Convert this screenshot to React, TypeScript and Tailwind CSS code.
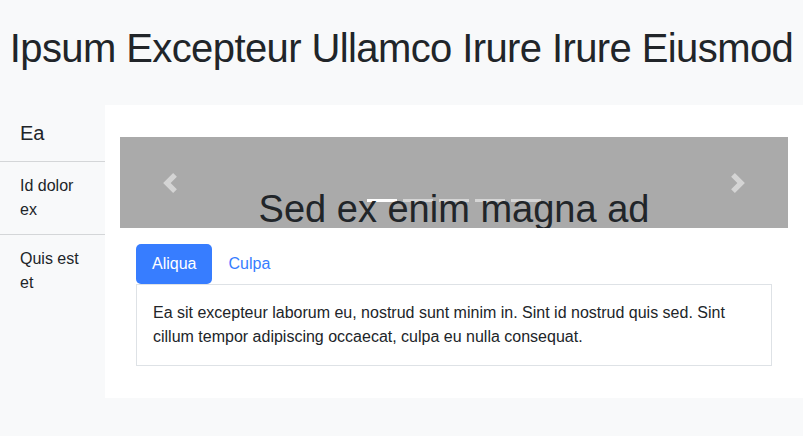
import React from "react";

const sideItems = ["Id dolor ex", "Quis est et"];

const Chevron = ({ dir }: { dir: "left" | "right" }) => (
  <svg width="20" height="20" viewBox="0 0 8 8" fill="#fff">
    {dir === "left" ? (
      <path d="M5.25 0l-4 4 4 4 1.5-1.5L4.25 4l2.5-2.5L5.25 0z" />
    ) : (
      <path d="M2.75 0l-1.5 1.5L3.75 4l-2.5 2.5L2.75 8l4-4-4-4z" />
    )}
  </svg>
);

const App = () => {
  return (
    <div className="min-h-screen bg-[#f8f9fa] text-[#212529] font-['Liberation_Sans',Arial,sans-serif]">
      <header className="h-[105px] pt-6 text-center">
        <h1 className="text-[40px] leading-[48px] font-medium tracking-[-0.6px]">
          Ipsum Excepteur Ullamco Irure Irure Eiusmod
        </h1>
      </header>

      <div className="flex">
        <aside className="w-[105px] shrink-0">
          <div className="px-5 py-3 text-[20px] leading-[32px] border-b border-[#d4d6d8]">
            Ea
          </div>
          {sideItems.map((item, i) => (
            <div
              key={item}
              className={
                i === 0
                  ? "px-5 py-3 text-base leading-6 border-b border-[#d4d6d8]"
                  : "px-5 py-3 text-base leading-6"
              }
            >
              {item}
            </div>
          ))}
        </aside>

        <main className="flex-1 bg-white px-[15px] py-8">
          <div className="relative h-[91px] overflow-hidden bg-[#aaaaaa]">
            <div className="absolute inset-y-0 left-0 w-[100px] flex items-center justify-center opacity-50">
              <Chevron dir="left" />
            </div>
            <div className="absolute inset-y-0 right-0 w-[100px] flex items-center justify-center opacity-50">
              <Chevron dir="right" />
            </div>
            <div className="absolute left-0 right-0 top-[62px] flex justify-center gap-[6px]">
              {[0, 1, 2, 3, 4].map((n) => (
                <span
                  key={n}
                  className={
                    n === 0
                      ? "block w-[30px] h-[3px] bg-white"
                      : "block w-[30px] h-[3px] bg-white opacity-50"
                  }
                />
              ))}
            </div>
            <h2 className="absolute left-0 right-0 top-[49px] text-center text-[38px] leading-[46px] font-medium">
              Sed ex enim magna ad
            </h2>
          </div>

          <div className="px-4 mt-4">
            <div className="flex">
              <button className="h-10 px-4 rounded-[5px] bg-[#377dff] text-white text-base leading-6">
                Aliqua
              </button>
              <button className="h-10 px-4 text-[#377dff] text-base leading-6">
                Culpa
              </button>
            </div>
            <div className="border border-[#dee2e6] p-4 text-base leading-6">
              Ea sit excepteur laborum eu, nostrud sunt minim in. Sint id nostrud quis sed. Sint
              cillum tempor adipiscing occaecat, culpa eu nulla consequat.
            </div>
          </div>
        </main>
      </div>
    </div>
  );
};

export default App;
